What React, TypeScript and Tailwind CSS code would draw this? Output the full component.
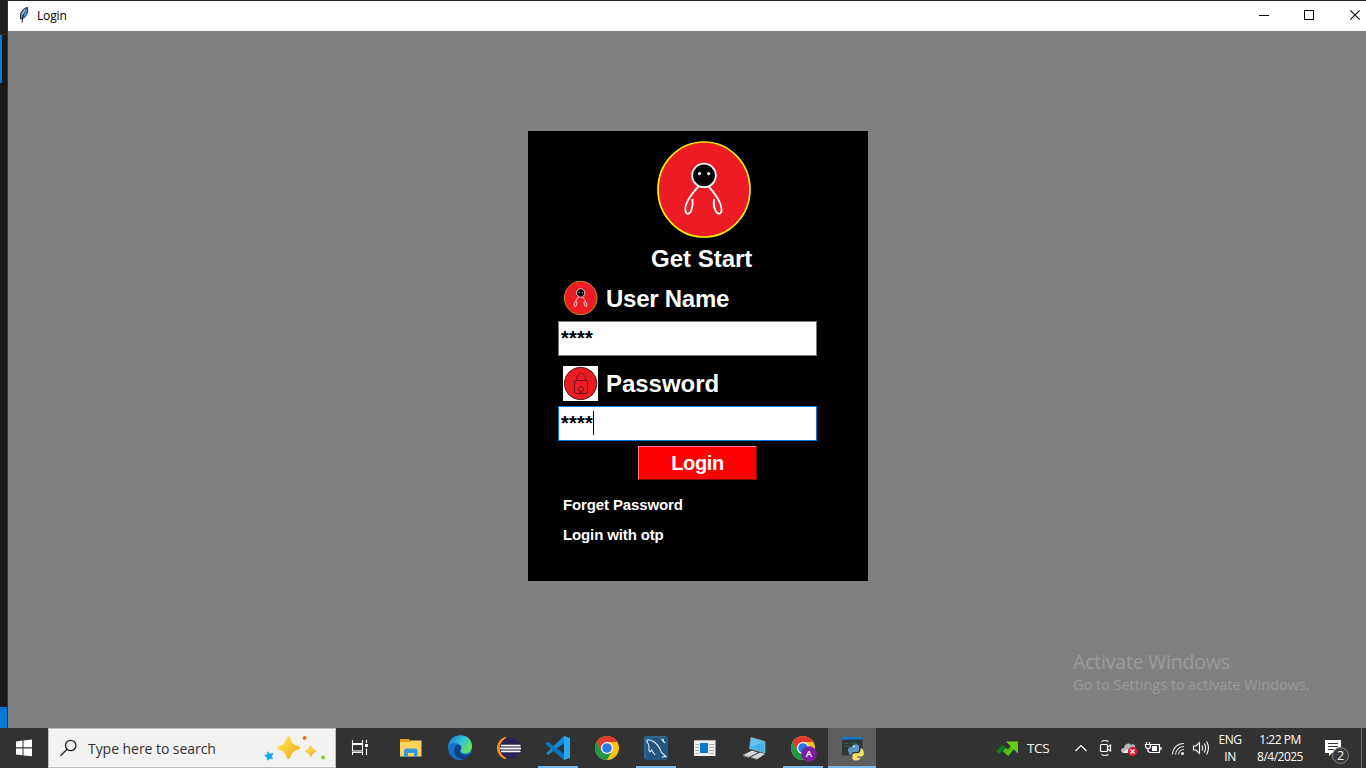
import type { ReactNode } from "react";

type GlyphProps = { x: number; w: number; y?: number; h?: number; children: ReactNode };

function Glyph({ x, w, y = 728, h = 40, children }: GlyphProps) {
  return (
    <svg className="block shrink-0" width={w} height={h} viewBox={`${x} ${y} ${w} ${h}`} fill="none">
      {children}
    </svg>
  );
}

function TaskSlot({ open = false, active = false, children }: { open?: boolean; active?: boolean; children: ReactNode }) {
  return (
    <div className={active ? "relative w-12 shrink-0 bg-[#5e5e5e]" : "relative w-12 shrink-0"}>
      {children}
      {(open || active) && (
        <span className={active ? "absolute bottom-0 left-0 h-0.5 w-12 bg-[#76b9ed]" : "absolute bottom-0 left-1 h-0.5 w-10 bg-[#76b9ed]"} />
      )}
    </div>
  );
}

function Figure({ line = 1.8 }: { line?: number }) {
  return (
    <>
      <circle cx="704" cy="175.4" r="11.8" fill="#000" stroke="#fff" strokeWidth={line} />
      <circle cx="699.6" cy="173.6" r="1.6" fill="#fff" />
      <circle cx="708.7" cy="173.6" r="1.6" fill="#fff" />
      <path
        d="M698.5 186.5C692 193 685 203 685.3 209.5C685.5 215 690 215.5 691.7 209C692.7 205.500 693 202 692.4 199M708.500 186.500C714 192 722 203 721.500 210C721.500 215 717 215 715 209.500C713.500 206 713.600 202 714 199"
        stroke="#fff"
        strokeWidth={line}
      />
    </>
  );
}

function Chrome({ cx, cy = 748 }: { cx: number; cy?: number }) {
  return (
    <g transform={`translate(${cx} ${cy})`}>
      <circle r="12" fill="#fbc116" />
      <path d="M-10.400 -6A12 12 0 0 1 10.400 -6H0L-5.200 3Z" fill="#dd3b2f" />
      <path d="M-10.400 -6A12 12 0 0 0 0 12L5.200 3H-5.200Z" fill="#209847" />
      <circle r="6" fill="#fff" />
      <circle r="4.800" fill="#2978e8" />
    </g>
  );
}

function TitleBar() {
  return (
    <div className="flex h-[31px] shrink-0 border-t border-[#202020] bg-white">
      <Glyph x={8} w={29} y={1} h={30}>
        <path d="M20.500 19C19.500 13 23 8 27.500 7.500C28.500 12 26 17.500 22.500 18.500Z" fill="#5b8fc9" stroke="#1b2c42" strokeWidth="1" />
        <path d="M26.500 8.500C24 12 22.500 16 22 22.500" stroke="#111" strokeWidth="1" />
        <path d="M25.500 9.500L22.500 14.500" stroke="#b9dcff" strokeWidth="1" />
      </Glyph>
      <span className="font-['Open_Sans',sans-serif] text-[12px] leading-[30px] tracking-[-0.150px] text-black">Login</span>
      <div className="flex-1" />
      <Glyph x={1250} w={116} y={1} h={30}>
        <g stroke="#000">
          <path d="M1259 15.500H1269" />
          <rect x="1304.500" y="10.500" width="9" height="9" />
          <path d="M1350.300 10.300L1359.700 19.700M1359.700 10.300L1350.300 19.700" strokeWidth="1.100" />
        </g>
      </Glyph>
    </div>
  );
}

function LoginCard() {
  return (
    <div className="ml-[520px] mt-[100px] flex h-[450px] w-[340px] flex-col bg-black pt-[9px] font-['Liberation_Sans',Arial,sans-serif] font-bold text-white">
      <div className="pl-32">
        <Glyph x={656} w={96} y={140} h={99}>
          <ellipse cx="704" cy="189.500" rx="46" ry="47.500" fill="#ed1c24" stroke="#f5ef0a" strokeWidth="1.700" />
          <Figure />
        </Glyph>
      </div>
      <div className="h-[41px] pl-[123px] text-2xl leading-[40px]">Get Start</div>
      <div className="flex h-[41px] pl-[35px]">
        <Glyph x={563} w={35} y={280} h={36}>
          <ellipse cx="580.700" cy="298" rx="16.300" ry="16.700" fill="#ed1c24" stroke="#c09020" strokeWidth="1" />
          <g transform="translate(580.700 298) scale(.35 .36) translate(-704 -189.500)">
            <Figure line={2.2} />
          </g>
        </Glyph>
        <span className="ml-2 whitespace-nowrap text-2xl leading-[37px] tracking-[-0.250px]">User Name</span>
      </div>
      <div className="ml-[30px] h-[35px] w-[259px] border border-[#7a7a7a] bg-white pl-0.5 text-xl leading-[33px] tracking-[0.200px] text-black">****</div>
      <div className="flex h-[50px] pl-[35px] pt-2.5">
        <Glyph x={563} w={35} y={366} h={35}>
          <rect x="563" y="366" width="35" height="35" fill="#fff" />
          <circle cx="580.600" cy="383.500" r="16.200" fill="#ed1c24" stroke="#4c1519" strokeWidth="1" />
          <g stroke="#731316" strokeWidth="1">
            <rect x="574.500" y="380.500" width="13" height="13" rx="1.500" />
            <path d="M576.500 380.500C576.500 376.500 579 373 581 373C583 373 585.500 376.500 585.500 380.500" />
            <circle cx="581" cy="389" r="2.500" />
            <path d="M579.500 392.500H582.500" />
          </g>
        </Glyph>
        <span className="ml-2 text-2xl leading-9 tracking-[-0.030px]">Password</span>
      </div>
      <div className="ml-[30px] flex h-[35px] w-[259px] border border-[#0078d7] bg-white pl-0.5 text-xl leading-[33px] text-black">
        <span className="w-8 tracking-[0.200px]">****</span>
        <span className="mt-1 h-6 w-px bg-black" />
      </div>
      <div className="ml-[110px] mt-[5px] h-[34px] w-[119px] border border-b-[#800000] border-l-[#ff8080] border-r-[#800000] border-t-[#ff8080] bg-[#f00] text-center text-xl leading-[32px] tracking-[-0.350px]">
        Login
      </div>
      <div className="mt-[10px] pl-[35px] text-[15px] leading-[30px] tracking-[-0.130px]">
        <div>Forget Password</div>
        <div>Login with otp</div>
      </div>
    </div>
  );
}

function Taskbar() {
  return (
    <div className="flex h-10 shrink-0 bg-[#323232] font-['Open_Sans',sans-serif] text-white">
      <Glyph x={0} w={48}>
        <path d="M16 741.500L22.500 740.600V747.300H16ZM23.500 740.400L32 739.500V747.300H23.500ZM16 748.500H22.500V755.300L16 754.500ZM23.500 748.500H32V756.300L23.500 755.400Z" fill="#fff" />
      </Glyph>
      <div className="flex w-72 shrink-0 border border-[#bcbcbc] bg-[#f2f2f2]">
        <Glyph x={49} w={39} y={729} h={38}>
          <g stroke="#222" strokeWidth="1.300">
            <circle cx="70.700" cy="745.500" r="5.200" />
            <path d="M67 749.200L60.500 755.700" />
          </g>
        </Glyph>
        <span className="w-[168px] whitespace-nowrap text-[14px] leading-[40px] tracking-[-0.050px] text-[#303030]">Type here to search</span>
        <Glyph x={256} w={79} y={729} h={38}>
          <defs>
            <linearGradient id="gold" x1="0" y1="0" x2="1" y2="1">
              <stop offset=".2" stopColor="#ffe04b" />
              <stop offset="1" stopColor="#f0a51b" />
            </linearGradient>
          </defs>
          <path d="M288.500 736C290.500 736 291.500 742.500 293.500 744C295.500 745.500 300 746 300 747.700C300 749.500 295.500 750 293.500 751.700C291.500 753.500 290.500 759 288.500 759C286.500 759 285.500 753.500 283.500 751.700C281.500 750 277 749.500 277 747.700C277 746 281.500 745.500 283.500 744C285.500 742.500 286.500 736 288.500 736Z" fill="url(#gold)" />
          <path d="M310.700 745.500Q312.500 749.500 316.500 751Q312.500 752.500 310.700 757Q309 752.500 305 751Q309 749.500 310.700 745.500Z" fill="url(#gold)" stroke="#f9bd2c" strokeWidth=".5" />
          <path d="M267.300 751.800L269.700 754L273 753.500L271.500 756.300L272.500 759L269.700 758.500L267.500 760.300L267 757.500L264.700 755.300L267.500 754.700Z" fill="#00a8ee" stroke="#00a8ee" strokeWidth=".6" strokeLinejoin="round" />
          <circle cx="304.600" cy="738" r="2" fill="#f26522" />
          <circle cx="323" cy="757.500" r="2" fill="#8bc53f" />
        </Glyph>
      </div>
      <Glyph x={336} w={51}>
        <g stroke="#fff" strokeWidth="1.100">
          <path d="M352.500 740V743.500H362.500V740M352.500 755V752.500H362.500V755M366.500 740V743M366.500 748.500V755" />
          <rect x="352.500" y="744.500" width="10" height="6.500" />
        </g>
        <rect x="365" y="744" width="3" height="3" fill="#fff" />
      </Glyph>
      <div className="flex gap-px">
        <TaskSlot>
          <Glyph x={387} w={48}>
            <path d="M400 739H409L410 741H421V756H400Z" fill="#e8a317" />
            <path d="M400 742H409.500L410.500 740.500H421.500V756.500H400Z" fill="#ffd45c" />
            <path d="M404 757V750L405.500 748.500H416L417.500 750V757H414V753H408V757Z" fill="#3797df" />
          </Glyph>
        </TaskSlot>
        <TaskSlot>
          <Glyph x={436} w={48}>
            <defs>
              <linearGradient id="edgeTop" x1="0" y1="0" x2="1" y2=".5">
                <stop offset=".15" stopColor="#1686d0" />
                <stop offset=".6" stopColor="#35c3d9" />
                <stop offset="1" stopColor="#65e55e" />
              </linearGradient>
            </defs>
            <circle cx="460" cy="748" r="12" fill="#1473c5" />
            <path d="M448 747C449 731 472 732 472 746C472 754 463 755 460.500 751.500C459.500 750 463 749 461 746C458 741.500 450 742 448 747Z" fill="url(#edgeTop)" />
            <path d="M456 745.500C451 753 457 760 465 759C468 758 470 756 471 753.500C466 756.500 460 755 460 751.500C460 749 462 748 460 745.500C459 744 457 744 456 745.500Z" fill="#123f7f" />
          </Glyph>
        </TaskSlot>
        <TaskSlot>
          <Glyph x={485} w={48}>
            <path d="M506 737.300A11 11 0 0 0 506 758.700A13 13 0 0 1 506 737.300Z" fill="#f7941e" stroke="#f7941e" strokeWidth="1.300" />
            <circle cx="510.300" cy="748" r="10.600" fill="#2c2255" />
            <path d="M501 745.500H520.500M500 748.500H521M501 751.500H520.500" stroke="#fff" strokeWidth="1.700" />
            <path d="M501 747H520.500M501 750H520.500" stroke="#a9a0c9" />
          </Glyph>
        </TaskSlot>
        <TaskSlot open>
          <Glyph x={534} w={48}>
            <path d="M564 736L569.500 738.300V757.700L564 760V743L548 755L546 753.300Z" fill="#168bd2" />
            <path d="M546 743L548 741.500L564 754V760L546 744.800Z" fill="#0878bd" />
            <path d="M564 736L570 738.300V757.700L564 760Z" fill="#29a9f2" />
          </Glyph>
        </TaskSlot>
        <TaskSlot>
          <Glyph x={583} w={48}>
            <Chrome cx={607} />
          </Glyph>
        </TaskSlot>
        <TaskSlot open>
          <Glyph x={632} w={48}>
            <rect x="644" y="736" width="24" height="24" rx="3" fill="#23577f" />
            <path d="M645 758V738Q645 737 646 737H666" stroke="#3e789f" />
            <path d="M646.500 740.500C648.500 738.500 651 740 653.500 741.500C659 745 660 749 661.500 752.500L666 756.500L662 757M646.500 740.500C647.500 743 649 744 649 747C648.500 752 650 753 651.500 750L655 755" stroke="#e5edf2" strokeWidth="1.100" />
            <path d="M660 738L662.500 739.500L664 738.500L664 741L666 743.500L663.500 742.500Z" fill="#e5edf2" />
          </Glyph>
        </TaskSlot>
        <TaskSlot>
          <Glyph x={681} w={48}>
            <rect x="694" y="740" width="21.500" height="16" fill="#f1f1f1" />
            <path d="M694 740.500H715.500" stroke="#b5b5b5" />
            <rect x="700" y="743" width="8" height="10" fill="#0878d1" />
            <path d="M695.500 744.500H699M695.500 747.500H699M695.500 750.500H699M695.500 753.500H699M709 744.500H714M709 747.500H714M709 750.500H714M709 753.500H714" stroke="#aaa" />
          </Glyph>
        </TaskSlot>
        <TaskSlot>
          <Glyph x={730} w={48}>
            <path d="M751 737.500L765 741.500V753L749.500 748.500Z" fill="#43afea" stroke="#a9c8d8" strokeWidth=".600" />
            <path d="M751.500 738.300L764 742L750.500 747.500Z" fill="#64c2f3" />
            <path d="M743 755L752 750.500L758 752.500L749 757ZM751 757L760 752.500L765 754L757 759.200Z" fill="#d4d8dc" />
            <path d="M743 755.500L749 757.500M751 757.500L757 759.200" stroke="#89939a" />
          </Glyph>
        </TaskSlot>
        <TaskSlot open>
          <Glyph x={779} w={48}>
            <Chrome cx={803} />
            <circle cx="809" cy="754" r="7.800" fill="#7b1fa2" />
            <text x="809" y="757.300" fill="#fff" fontSize="9.500" fontWeight="600" fontFamily="Open Sans" textAnchor="middle">A</text>
          </Glyph>
        </TaskSlot>
        <TaskSlot active>
          <Glyph x={828} w={48}>
            <rect x="842" y="737" width="20.500" height="18.500" fill="#30363a" />
            <rect x="842" y="737" width="20.500" height="2.500" fill="#1279c6" />
            <path d="M844 743.500H849M844 746.500H850M851 743.500H857" stroke="#3d5a3d" />
            <path d="M848.500 752C847 748 849 747 852 747V745.500Q856 743 859 745.500V750.500Q859 752 857 752H853.500Q851.500 752.500 851.500 755H850Q849 754.500 848.500 752Z" fill="#5b94c0" />
            <path d="M860.500 748.500H862C864.500 751 864.500 756 861.500 756.500H857V757.700H860V759.300Q855 762 852.500 759V755Q852.500 753.300 854.500 753.300H858.500Q860.500 752.500 860.500 750Z" fill="#ffe16a" />
            <circle cx="854" cy="746.500" r=".8" fill="#fff" />
          </Glyph>
        </TaskSlot>
      </div>
      <div className="flex-1" />
      <Glyph x={994} w={33}>
        <path d="M997.500 752.500L1002.500 747.500L1008 753" stroke="#137a1c" strokeWidth="4" />
        <path d="M1001 747.500L1003 745.500L1010 752.500" stroke="#137a1c" strokeWidth="1" />
        <path d="M1004.500 749.500L1008 753L1014 745.500" stroke="#55bd13" strokeWidth="4.500" />
        <path d="M1006 741.500H1018V753.500Z" fill="#66cf16" />
      </Glyph>
      <span className="w-[43px] text-[13.500px] leading-10 tracking-[-0.400px]">TCS</span>
      <Glyph x={1070} w={149}>
        <g stroke="#fff" strokeWidth="1.200">
          <path d="M1075.500 751L1081 745.500L1086.500 751" />
          <rect x="1100.500" y="744.500" width="7" height="7" rx="1" />
          <path d="M1107.500 747L1110.500 745V751L1107.500 749M1101.500 741.500Q1105 739.500 1108.500 741.500M1101.500 754.500Q1105 756.500 1108.500 754.500" />
          <path d="M1151 744.500H1159.500V752.500H1149M1161 747V750M1146.500 742V745M1149.500 742V745M1148 748.500V751.500L1150 752.500" />
          <path d="M1145.500 744.500H1150.500V746Q1150.500 748.500 1148 748.500Q1145.500 748.500 1145.500 746Z" />
        </g>
        <rect x="1152" y="746" width="5" height="5" fill="#fff" />
        <path d="M1124 753C1120 753 1120 748 1124 748C1124 744 1129 742 1131 745C1134 743 1136 746 1135 749L1130 753Z" fill="#b5b5b5" />
        <path d="M1123 752L1131 747L1135 750L1131 753H1124Z" fill="#f0f0f0" />
        <circle cx="1132.500" cy="751.500" r="4.700" fill="#d51e30" />
        <path d="M1130.500 749.500L1134.500 753.500M1134.500 749.500L1130.500 753.500" stroke="#fff" strokeWidth="1.200" />
        <g stroke="#e7e7e7" strokeWidth="1.100">
          <path d="M1172.500 754.500A11 11 0 0 1 1184 743.500M1175.500 754.500A8.500 8.500 0 0 1 1184 746.500M1178.500 754.500A5.500 5.500 0 0 1 1184 749.500" />
        </g>
        <circle cx="1182.500" cy="753.500" r="1.500" fill="#fff" />
        <g stroke="#fff" strokeWidth="1.100">
          <path d="M1193.500 746H1196L1199.500 742.500V753.500L1196 750H1193.500ZM1202 745.500Q1203.500 748 1202 750.500M1204.300 743.500Q1206.800 748 1204.300 752.500M1206.600 741.500Q1210.300 748 1206.600 754.500" />
        </g>
      </Glyph>
      <div className="-ml-px w-6 whitespace-nowrap pt-[3px] text-center text-[12px] leading-[17px] tracking-[-0.500px]">
        <div>ENG</div>
        <div>IN</div>
      </div>
      <div className="mr-px w-[76px] whitespace-nowrap pt-[3px] text-center text-[12px] leading-[17px] tracking-[-0.500px]">
        <div>1:22 PM</div>
        <div>8/4/2025</div>
      </div>
      <Glyph x={1319} w={47}>
        <path d="M1325 740H1341V753H1332L1329 756V753H1325Z" fill="#fff" />
        <path d="M1328 743.500H1338M1328 746.500H1338M1328 749.500H1334" stroke="#333" />
        <circle cx="1340.500" cy="755.500" r="7.900" fill="#383838" stroke="#858585" />
        <text x="1340.500" y="759.700" fill="#fff" fontSize="12.500" fontWeight="500" fontFamily="Open Sans" textAnchor="middle">2</text>
        <path d="M1361.500 728V768" stroke="#707070" />
      </Glyph>
    </div>
  );
}

export default function App() {
  return (
    <div className="flex h-[768px] w-[1366px] flex-col overflow-hidden">
      <div className="flex h-[728px] shrink-0">
        <div className="flex w-2 shrink-0 flex-col border-r border-[#333] bg-[#181818]">
          <div className="h-[35px] border-b border-[#303030] bg-[#202020]" />
          <div className="h-12 w-0.5 bg-[#0078d4]" />
          <div className="flex-1" />
          <div className="h-[21px] bg-[#0078d4]" />
        </div>
        <div className="relative w-[1358px] shrink-0 bg-[#808080]">
          <TitleBar />
          <LoginCard />
          <div className="absolute left-[1065px] top-[648px] whitespace-nowrap font-['Open_Sans',sans-serif] text-[#9b9b9b]">
            <div className="text-[19.500px] leading-[27px] tracking-[-0.200px]">Activate Windows</div>
            <div className="text-[14.500px] leading-[20px] tracking-[-0.030px]">Go to Settings to activate Windows.</div>
          </div>
        </div>
      </div>
      <Taskbar />
    </div>
  );
}
